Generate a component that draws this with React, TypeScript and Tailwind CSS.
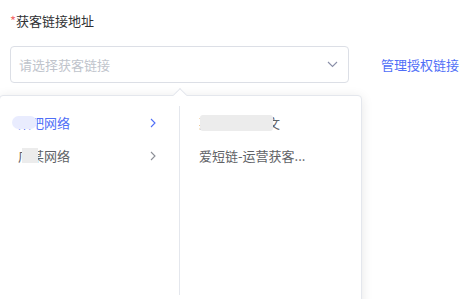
import React from 'react';

const font = { fontFamily: '"Noto Sans CJK SC", "Noto Sans", sans-serif' };

const ChevronRight = ({ color }: { color: string }) => (
  <svg width="6" height="10" viewBox="0 0 6 10" fill="none">
    <path d="M1 1l4 4-4 4" stroke={color} strokeWidth="1.1" />
  </svg>
);

const App: React.FC = () => {
  return (
    <div className="relative w-[476px] h-[299px] overflow-hidden bg-white" style={font}>
      {/* label */}
      <div className="pl-[10px] pt-[11px] text-[13px] leading-[20px] text-[#303133]">
        <span className="text-[#f56c6c]">*</span>获客链接地址
      </div>

      {/* select + link */}
      <div className="flex items-center mt-[15px] pl-[10px]">
        <div className="flex items-center justify-between w-[339px] h-[37px] border border-[#dcdfe6] rounded-[4px] pl-[8px] pr-[10px]">
          <span className="text-[13px] text-[#c0c4cc]">请选择获客链接</span>
          <svg width="11" height="7" viewBox="0 0 11 7" fill="none">
            <path d="M1 1l4.5 4.5L10 1" stroke="#8a8fa8" strokeWidth="1.1" />
          </svg>
        </div>
        <a className="ml-[32px] text-[13px] text-[#4f6ef7]">管理授权链接</a>
      </div>

      {/* cascader dropdown */}
      <div className="absolute left-[-1px] top-[95px] w-[363px] h-[220px] bg-white border border-[#e4e7ed] rounded-[4px] shadow-[0_2px_12px_rgba(0,0,0,0.1)]">
        <div className="absolute left-[175px] top-[-6px] w-[10px] h-[10px] rotate-45 bg-white border-l border-t border-[#e4e7ed]" />
        <div className="flex pt-[10px]">
          <div className="w-[180px] h-[189px] border-r border-[#e4e7ed] text-[13px]">
            <div className="relative flex items-center justify-between h-[33px] pl-[18px] pr-[23px] text-[#4f6ef7]">
              <span>某吧网络</span>
              <ChevronRight color="#4f6ef7" />
              <span className="absolute left-[12px] top-[10px] w-[25px] h-[13px] rounded-full bg-[#e9ecfe] blur-[0.5px]" />
            </div>
            <div className="relative flex items-center justify-between h-[33px] pl-[18px] pr-[23px] text-[#606266]">
              <span>广某网络</span>
              <ChevronRight color="#8c8f96" />
              <span className="absolute left-[22px] top-[9px] w-[16px] h-[15px] bg-[#ececec] blur-[0.5px]" />
            </div>
          </div>
          <div className="flex-1 text-[13px] text-[#606266]">
            <div className="relative flex items-center h-[33px] pl-[19px]">
              <span>某某某某某 文</span>
              <span className="absolute left-[20px] top-[9px] w-[73px] h-[16px] rounded-[3px] bg-[#ececec] blur-[0.5px]" />
            </div>
            <div className="flex items-center h-[33px] pl-[19px]">
              <span>爱短链-运营获客...</span>
            </div>
          </div>
        </div>
      </div>
    </div>
  );
};

export default App;
